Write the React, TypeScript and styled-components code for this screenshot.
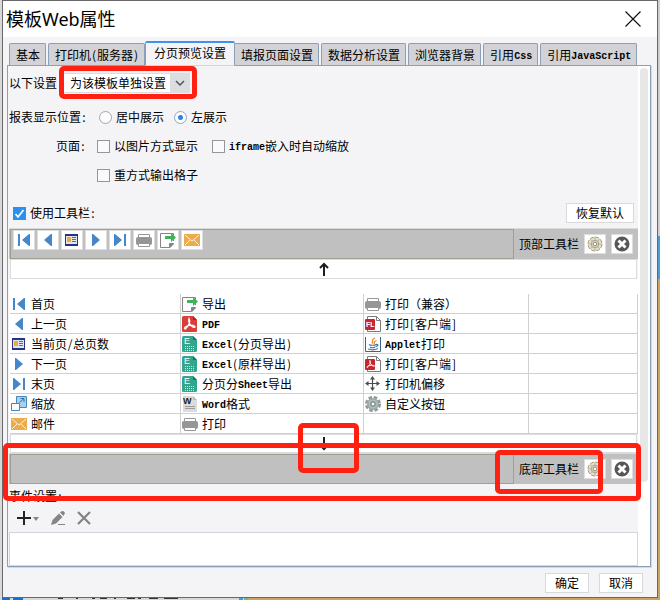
import React from "react";
import styled, { createGlobalStyle } from "styled-components";

const GlobalStyle = createGlobalStyle`
  * { box-sizing: border-box; }
  body {
    margin: 0;
    color: #000;
    font: 12px/20px "Noto Sans CJK SC", sans-serif;
  }
  button, input, select { font: inherit; color: inherit; margin: 0; }
  svg { display: block; flex: none; }
`;

/* ---------- window ---------- */

const Desktop = styled.div`
  display: grid;
  grid-template-rows: 1fr 2px;
  min-height: 100vh;
  padding: 0 2px 0 2px;
  background:
    linear-gradient(90deg, #d8d8d8 0 245px, transparent 0) left bottom / 100% 100% no-repeat,
    linear-gradient(180deg, #cfcfcf 0 236px, #4d9bd3 0 279px, #c9a562 0);
`;

const Edge = styled.div`
  display: flex;
  align-items: flex-end;
  overflow: hidden;
`;

const Dialog = styled.main`
  position: relative;
  display: flex;
  flex-direction: column;
  border: 1px solid #68686a;
  background: #f4f4f7;
  min-width: 0;
`;

const TitleBar = styled.header`
  display: flex;
  align-items: center;
  justify-content: space-between;
  height: 36px;
  padding: 0 16px 0 3px;
  background: #fff;
`;

const Title = styled.h1`
  margin: 0;
  font: 18px/34px "Noto Sans", "Noto Sans CJK SC", sans-serif;
`;

const PlainButton = styled.button`
  display: flex;
  align-items: center;
  padding: 0;
  border: 0;
  background: none;
`;

/* ---------- tabs ---------- */

const TabList = styled.div`
  display: flex;
  align-items: flex-end;
  gap: 2px;
  height: 28px;
  padding: 4px 6px 0;
`;

const Tab = styled.button<{ $active?: boolean }>`
  position: relative;
  flex: none;
  height: ${(p) => (p.$active ? "25px" : "22px")};
  margin: ${(p) => (p.$active ? "0 -3px -1px -2px" : "0")};
  padding: ${(p) => (p.$active ? "0 8px 4px" : "0 5px 0 6px")};
  z-index: ${(p) => (p.$active ? 1 : 0)};
  border: 1px solid #8c9fb8;
  border-top: ${(p) => (p.$active ? "2px solid #3d94f0" : "1px solid #8c9fb8")};
  border-bottom: ${(p) => (p.$active ? "1px solid #d2d5dc" : "0")};
  border-radius: 2px 2px 0 0;
  background: ${(p) => (p.$active ? "#f4f4f7" : "#d3d3d7")};
  white-space: nowrap;
`;

const Latin = styled.span`
  font: bold 10px/12px "Liberation Mono", monospace;
  vertical-align: 1px;
`;

const Punct = styled.span`
  display: inline-block;
  width: 6px;
  text-align: center;
`;

const Panel = styled.section`
  display: flex;
  flex: 1;
  margin: 0 6px 0 4px;
  border: 1px solid #8c9fb8;
  box-shadow: 1px 1px 0 #d5d8df;
`;

const Content = styled.div`
  flex: 1;
  min-width: 0;
  padding: 7px 0 0 1px;
`;

const ScrollTrack = styled.div`
  width: 12px;
  padding: 2px 2px;
  background: #fff;
`;

const ScrollThumb = styled.div`
  height: 414px;
  border-radius: 4px;
  background: #e7e7e7;
`;

/* ---------- form ---------- */

const Row = styled.div<{ $top?: number }>`
  display: flex;
  align-items: center;
  height: 20px;
  margin-top: ${(p) => p.$top ?? 0}px;
  white-space: nowrap;
`;

const RowSpacer = styled.span`
  flex: 1;
`;

const RowLabel = styled.span<{ $width: number; $right?: boolean }>`
  width: ${(p) => p.$width}px;
  flex: none;
  text-align: ${(p) => (p.$right ? "right" : "left")};
`;

const Option = styled.label<{ $left?: number }>`
  display: flex;
  align-items: center;
  gap: 4px;
  margin-left: ${(p) => p.$left ?? 0}px;
`;

const SelectBox = styled.div`
  display: grid;
  grid-template-columns: 106px 20px;
  margin-left: 6px;
  height: 20px;
  border: 1px solid #dcdde1;
  border-right: 0;
  background: #fff;

  select {
    grid-area: 1 / 1 / 2 / 3;
    appearance: none;
    border: 0;
    padding: 0 0 0 6px;
    background: none;
    line-height: 18px;
  }
  svg { grid-area: 1 / 2; background: #dcdde1; pointer-events: none; }
`;

const Radio = styled.input`
  appearance: none;
  width: 13px;
  height: 13px;
  border: 1px solid #a5a5aa;
  border-radius: 50%;
  background: #fcfcfd;
  &:checked {
    border-color: #8fa8c8;
    background: radial-gradient(circle, #2c83e8 0 2px, #fcfcfd 3px);
  }
`;

const CheckWrap = styled.span`
  display: grid;
  width: 13px;
  height: 13px;
  input {
    grid-area: 1 / 1;
    appearance: none;
    width: 13px;
    height: 13px;
    border: 1px solid #97979b;
    background: #fafafb;
  }
  input:checked { border-color: #2b90ee; background: #2b90ee; }
  svg { grid-area: 1 / 1; z-index: 1; visibility: hidden; pointer-events: none; }
  input:checked + svg { visibility: visible; }
`;

const Check = ({ checked }: { checked?: boolean }) => (
  <CheckWrap>
    <input type="checkbox" defaultChecked={checked} />
    <svg width="13" height="13" viewBox="0 0 13 13">
      <path d="M2.500 7 5 10l5.500-7" fill="none" stroke="#fff" strokeWidth="1.700" />
    </svg>
  </CheckWrap>
);

const TextButton = styled.button<{ $width: number }>`
  width: ${(p) => p.$width}px;
  height: 20px;
  padding: 0;
  border: 1px solid #d9d9dd;
  background: #fff;
  line-height: 18px;
`;

const RestoreRow = styled(Row)`
  margin-bottom: 5px;
  padding: 0 4px;
`;

/* ---------- toolbars ---------- */

const ToolbarRow = styled.div`
  display: flex;
  height: 31px;
  border-top: 1px solid #d9d9d9;
  background: #c0c0c0;
`;

const ToolStrip = styled.div`
  display: flex;
  align-items: flex-start;
  gap: 2px;
  flex: 1;
  min-width: 0;
  margin-left: 1px;
  padding: 0 2px;
  border: 1px solid #9f9f92;
`;

const ToolbarSide = styled.div`
  display: flex;
  align-items: center;
  width: 124px;
  gap: 5px;
  padding-left: 5px;
`;

const IconButton = styled.button`
  display: flex;
  align-items: center;
  justify-content: center;
  width: 22px;
  height: 20px;
  padding: 0;
  border: 1px solid #dedede;
  background: #fff;
`;

const DropBar = styled.div<{ $height: number }>`
  display: flex;
  align-items: center;
  justify-content: center;
  height: ${(p) => p.$height}px;
  margin: 0 1px;
  border: 1px solid #dcdce0;
  background: #fff;
`;

const ToolTable = styled.table`
  width: 100%;
  border-collapse: separate;
  border-spacing: 0;
  table-layout: fixed;
`;

const TableBack = styled.div`
  padding: 15px 0 0 1px;
  background: #fff;
`;

const Col = styled.col<{ $width?: number }>`
  width: ${(p) => (p.$width ? p.$width + "px" : "auto")};
`;

const Cell = styled.td`
  height: 20px;
  padding: 0 0 0 1px;
  border-right: 1px solid #d0d0d0;
  border-bottom: 1px solid #d0d0d0;
`;

const Tool = styled.div`
  display: flex;
  align-items: center;
  gap: 4px;
  height: 19px;
  line-height: 18px;
  white-space: nowrap;
`;

/* ---------- events and footer ---------- */

const EventActions = styled.div`
  display: flex;
  align-items: center;
  height: 24px;
  padding-left: 7px;
`;

const EventButton = styled(PlainButton)<{ $left?: number }>`
  margin-left: ${(p) => p.$left ?? 0}px;
`;

const EventList = styled.div`
  height: 34px;
  margin-top: 2px;
  border: 1px solid #d5d6db;
  background: #fff;
`;

const Footer = styled.footer`
  display: flex;
  justify-content: flex-end;
  gap: 10px;
  padding: 6px 14px 4px;
`;

const Mark = styled.div<{ $x: number; $y: number; $w: number; $h: number }>`
  position: absolute;
  left: ${(p) => p.$x}px;
  top: ${(p) => p.$y}px;
  width: ${(p) => p.$w}px;
  height: ${(p) => p.$h}px;
  border: 5px solid #ff2012;
  border-radius: 5px;
  z-index: 2;
  pointer-events: none;
`;

/* ---------- icons ---------- */

const blue = "#4787c9";

const shapes: Record<string, React.ReactNode> = {
  first: <path fill={blue} d="M2 2h2v12H2zM14 2v12h-1L6 8l7-6z" />,
  prev: <path fill={blue} d="M12 2v12h-1L4 8l7-6z" />,
  next: <path fill={blue} d="M4 2v12h1l7-6-7-6z" />,
  last: <path fill={blue} d="M2 2v12h1l7-6-7-6zM12 2h2v12h-2z" />,
  page: (
    <>
      <path fill="#29337f" d="M1 2h13v12H1z" />
      <path fill="#dfe6f2" d="M2 4h11v8H2z" />
      <path fill="#efa83c" d="M3 5h4v5H3z" />
      <path stroke="#4b6fae" d="M8 5.500h4M8 7.500h4M8 9.500h4" />
    </>
  ),
  scale: (
    <>
      <path fill="#a9d0f0" stroke="#4688bd" d="M5.500.5h10v11h-10z" />
      <path fill="#fff" stroke="#4688bd" d="M.5 7.500h8v7h-8z" />
      <path fill="none" stroke="#2f72ad" d="m8.500 6.500 4.500-4M9.500 2.500H13V6" />
    </>
  ),
  mail: (
    <>
      <path fill="#ecac4c" d="M0 2h16v12H0z" />
      <path fill="none" stroke="#fff3dc" d="m1 3 7 6 7-6M1 13l5-5M15 13l-5-5" />
    </>
  ),
  exportFile: (
    <>
      <path fill="#fff" stroke="#858585" d="M13.500 9V1.500H.5v14h9l4-4H9.500v4" />
      <path fill="#858585" d="M10 12h4l-4 4z" />
      <path fill="#3eb456" d="M5 4h6V1l5 4.500L11 10V7H5z" />
    </>
  ),
  pdf: (
    <>
      <path fill="#d93f38" d="M1.500 0H11l4 4v11a1 1 0 0 1-1 1H1.500A1.500 1.500 0 0 1 0 14.500v-13Q0 0 1.500 0" />
      <path fill="#9f2824" d="M11 0v4h4z" />
      <path fill="none" stroke="#fff" strokeWidth="1.300" d="M7 2.500c2 4-1 8-3.500 10.500-1.500 0-1.500-1.500.5-2.500 3-1.500 7-1.500 9 0 0 1.500-2 1-3.500-.5C7.500 8 6 5 7 2.500z" />
    </>
  ),
  excel: (
    <>
      <path fill="#32a68c" d="M1.500 0H11l4 4v10.500a1.500 1.500 0 0 1-1.500 1.500h-12A1.500 1.500 0 0 1 0 14.500v-13Q0 0 1.500 0" />
      <path fill="#187560" d="M11 0v4h4z" />
      <text x="2" y="8" fill="#fff" fontSize="9" fontFamily="Liberation Sans, sans-serif">E</text>
      <path stroke="#c6eee2" strokeDasharray="1 1" d="M3 10.500h10M3 12.500h10M3 14.500h10" />
    </>
  ),
  word: (
    <>
      <path fill="#dcdcdc" d="M1 0h10l4 4v12H1z" />
      <path fill="#bcbcbc" d="M11 0v4h4z" />
      <text x="1" y="8" fill="#222" fontSize="9" fontWeight="bold" fontFamily="Liberation Sans, sans-serif">W</text>
      <path stroke="#9c9c9c" d="M3 10.500h10M3 12.500h10" />
    </>
  ),
  print: (
    <>
      <path fill="#fff" stroke="#979797" d="M2.500 2.500h11v4h-11z" />
      <rect y="5" width="16" height="8" rx="2" fill="#969696" />
      <path fill="#fff" stroke="#979797" d="M2.500 11.500h11v3h-11z" />
    </>
  ),
  flash: (
    <>
      <path fill="#fff" stroke="#7b7b7b" d="M2.500.5h9l4 4v11h-13zM11.500.5v4h4" />
      <rect y="3" width="10" height="11" rx="1" fill="#c9252b" />
      <text x="1" y="11" fill="#fff" fontSize="7" fontWeight="bold" fontFamily="Liberation Sans, sans-serif">FL</text>
    </>
  ),
  acrobat: (
    <>
      <path fill="#fff" stroke="#7b7b7b" d="M2.500.5h9l4 4v11h-13zM11.500.5v4h4" />
      <rect y="3" width="10" height="11" rx="1" fill="#c9252b" />
      <path fill="none" stroke="#fff" d="M5 4.500c1 3-1 5.500-3 7 0-2 5-3 7.500-1.500C7 10.500 4.500 7.500 5 4.500z" />
    </>
  ),
  java: (
    <>
      <path fill="#fff" stroke="#38668a" d="M.5 1v14.500h15V1" />
      <path fill="none" stroke="#e98b2f" strokeWidth="1.300" d="M10 2c-5 2-1 3-3 5.500M11.500 4.500C8 5.500 10 6.500 9 8" />
      <path fill="none" stroke="#4c7599" strokeWidth="1.200" d="M4 8.500c1 1 6 1 7 0M11 8.500c3-.5 2 2-.5 2M5 11c1 1 4 1 5 0M3 13c3 1 7 1 10-.5" />
    </>
  ),
  move: (
    <>
      <path stroke="#4c4c4c" strokeWidth="1.200" d="M7.500 2v11M1 7.500h13" />
      <path fill="#4c4c4c" d="M7.500 0 10 3.500H5zM7.500 15 5 11.500h5zM0 7.500 3.500 5v5zM15 7.500 11.500 5v5z" />
    </>
  ),
  gear: (
    <>
      <circle cx="8" cy="8" r="6.500" fill="none" stroke="#8d9a98" strokeWidth="3" strokeDasharray="3.400 1.700" />
      <circle cx="8" cy="8" r="6" fill="#9eaba9" />
      <circle cx="8" cy="8" r="4" fill="none" stroke="#b3c0be" />
      <circle cx="8" cy="8" r="2" fill="#fff" stroke="#75817f" />
    </>
  ),
  setting: (
    <>
      <circle cx="8" cy="8" r="7" fill="#e6e0cb" stroke="#9d9780" strokeDasharray="4 1.500" />
      <path stroke="#b5ae96" strokeWidth=".8" d="M8 1v14M1 8h14M3 3l10 10M13 3 3 13" />
      <circle cx="8" cy="8" r="3.800" fill="#ddd7c2" stroke="#aaa38b" />
      <circle cx="8" cy="8" r="1.800" fill="#fff" stroke="#928c76" />
    </>
  ),
  remove: (
    <>
      <circle cx="8" cy="8" r="7.500" fill="#575757" />
      <path stroke="#fff" strokeWidth="3" d="m4.500 4.500 7 7M11.500 4.500l-7 7" />
    </>
  ),
  up: <path fill="none" stroke="#1d1d1d" strokeWidth="2" d="M8 15V3M4 7l4-4 4 4" />,
  down: <path fill="none" stroke="#1d1d1d" strokeWidth="2" d="M8 1v12M4 9l4 4 4-4" />,
  close: <path stroke="#111" strokeWidth="1.200" d="m.5.5 15 15M15.500.5l-15 15" />,
  plus: <path stroke="#222" strokeWidth="2" d="M8 1v14M1 8h14" />,
  pencil: (
    <>
      <path fill="#858585" d="m1 15 1.500-5L9 3.500 12.500 7 6 13.500zM10 2.500 12 1q2-.5 3 2l-1.500 3z" />
      <path stroke="#858585" d="M8 14.500h7" />
    </>
  ),
  cross: <path stroke="#838383" strokeWidth="2.200" d="m2 2 12 12M14 2 2 14" />,
};

const Icon = ({ name }: { name: string }) => (
  <svg width="16" height="16" viewBox="0 0 16 16" aria-hidden="true">
    {shapes[name]}
  </svg>
);

/* ---------- data ---------- */

const mixed = (text: string) =>
  text.split(/([A-Za-z]+|[()[\]/:])/).map((part, i) => {
    if (i % 2 === 0) return part;
    return /[A-Za-z]/.test(part) ? <Latin key={i}>{part}</Latin> : <Punct key={i}>{part}</Punct>;
  });

const tabs = [
  "基本", "打印机(服务器)", "分页预览设置", "填报页面设置",
  "数据分析设置", "浏览器背景", "引用Css", "引用JavaScript",
];

const quickTools = [
  ["first", "首页"], ["prev", "上一页"], ["page", "当前页/总页数"], ["next", "下一页"],
  ["last", "末页"], ["print", "打印"], ["exportFile", "导出"], ["mail", "邮件"],
];

const toolRows: ([string, string] | null)[][] = [
  [["first", "首页"], ["exportFile", "导出"], ["print", "打印（兼容）"], null],
  [["prev", "上一页"], ["pdf", "PDF"], ["flash", "打印[客户端]"], null],
  [["page", "当前页/总页数"], ["excel", "Excel(分页导出)"], ["java", "Applet打印"], null],
  [["next", "下一页"], ["excel", "Excel(原样导出)"], ["acrobat", "打印[客户端]"], null],
  [["last", "末页"], ["excel", "分页分Sheet导出"], ["move", "打印机偏移"], null],
  [["scale", "缩放"], ["word", "Word格式"], ["gear", "自定义按钮"], null],
  [["mail", "邮件"], ["print", "打印"], null, null],
];

const Toolbar = ({ label, tools }: { label: string; tools: string[][] }) => (
  <ToolbarRow>
    <ToolStrip>
      {tools.map(([icon, name]) => (
        <IconButton key={icon} aria-label={name}><Icon name={icon} /></IconButton>
      ))}
    </ToolStrip>
    <ToolbarSide>
      <RowLabel $width={60}>{label}</RowLabel>
      <IconButton aria-label="设置"><Icon name="setting" /></IconButton>
      <IconButton aria-label="删除"><Icon name="remove" /></IconButton>
    </ToolbarSide>
  </ToolbarRow>
);

export default function App() {
  return (
    <>
      <GlobalStyle />
      <Desktop>
        <Dialog>
          <TitleBar>
            <Title>模板Web属性</Title>
            <PlainButton aria-label="关闭"><Icon name="close" /></PlainButton>
          </TitleBar>
          <TabList role="tablist">
            {tabs.map((tab, i) => (
              <Tab key={tab} role="tab" aria-selected={i === 2} $active={i === 2}>
                {mixed(tab)}
              </Tab>
            ))}
          </TabList>
          <Panel>
            <Content>
              <Row>
                <label htmlFor="scope">以下设置</label>
                <SelectBox>
                  <select id="scope"><option>为该模板单独设置</option></select>
                  <svg width="20" height="18" viewBox="0 0 20 18">
                    <path d="m6 7 4 4 4-4" fill="none" stroke="#555" strokeWidth="1.500" />
                  </svg>
                </SelectBox>
              </Row>
              <Row $top={14}>
                <RowLabel $width={90}>{mixed("报表显示位置:")}</RowLabel>
                <Option><Radio type="radio" name="place" />居中展示</Option>
                <Option $left={10}><Radio type="radio" name="place" defaultChecked />左展示</Option>
              </Row>
              <Row $top={9}>
                <RowLabel $width={77} $right>{mixed("页面:")}</RowLabel>
                <Option $left={11}><Check />以图片方式显示</Option>
                <Option $left={14}><Check /><span>{mixed("iframe嵌入时自动缩放")}</span></Option>
              </Row>
              <Row $top={9}>
                <Option $left={88}><Check />重方式输出格子</Option>
              </Row>
              <RestoreRow $top={18}>
                <Option><Check checked /><span>{mixed("使用工具栏:")}</span></Option>
                <RowSpacer />
                <TextButton $width={68}>恢复默认</TextButton>
              </RestoreRow>
              <Toolbar label="顶部工具栏" tools={quickTools} />
              <DropBar $height={20}><Icon name="up" /></DropBar>
              <TableBack>
                <ToolTable>
                  <colgroup>
                    <Col $width={171} /><Col $width={183} /><Col $width={165} /><Col />
                  </colgroup>
                  <tbody>
                    {toolRows.map((row, r) => (
                      <tr key={r}>
                        {row.map((tool, c) => (
                          <Cell key={c}>
                            {tool && (
                              <Tool><Icon name={tool[0]} /><span>{mixed(tool[1])}</span></Tool>
                            )}
                          </Cell>
                        ))}
                      </tr>
                    ))}
                  </tbody>
                </ToolTable>
              </TableBack>
              <DropBar $height={19}><Icon name="down" /></DropBar>
              <Toolbar label="底部工具栏" tools={[]} />
              <Row $top={2}>{mixed("事件设置:")}</Row>
              <EventActions>
                <EventButton aria-label="添加">
                  <Icon name="plus" />
                  <svg width="8" height="16" viewBox="0 0 8 16"><path fill="#858585" d="M1 7h6l-3 4z" /></svg>
                </EventButton>
                <EventButton $left={10} aria-label="编辑"><Icon name="pencil" /></EventButton>
                <EventButton $left={10} aria-label="删除"><Icon name="cross" /></EventButton>
              </EventActions>
              <EventList />
            </Content>
            <ScrollTrack><ScrollThumb /></ScrollTrack>
          </Panel>
          <Footer>
            <TextButton $width={44}>确定</TextButton>
            <TextButton $width={44}>取消</TextButton>
          </Footer>
          <Mark $x={56} $y={65} $w={138} $h={33} />
          <Mark $x={295} $y={422} $w={61} $h={50} />
          <Mark $x={0} $y={442} $w={638} $h={58} />
          <Mark $x={492} $y={449} $w={108} $h={44} />
        </Dialog>
        <Edge>
          <svg width="246" height="2" viewBox="0 0 246 2">
            <path stroke="#1a6fd0" strokeWidth="2" d="M0 1h8M11 1h10" />
            <path stroke="#333" d="M56 .5h5M74 .5h2M90 .5h3M98 .5h7M112 .5h2M125 .5h8M136 .5h3M147 .5h9M162 .5h14" />
            <path stroke="#4d9bd3" strokeWidth="2" d="M237 1h4" />
            <path stroke="#6cbb7f" strokeWidth="2" d="M242 1h4" />
          </svg>
        </Edge>
      </Desktop>
    </>
  );
}
